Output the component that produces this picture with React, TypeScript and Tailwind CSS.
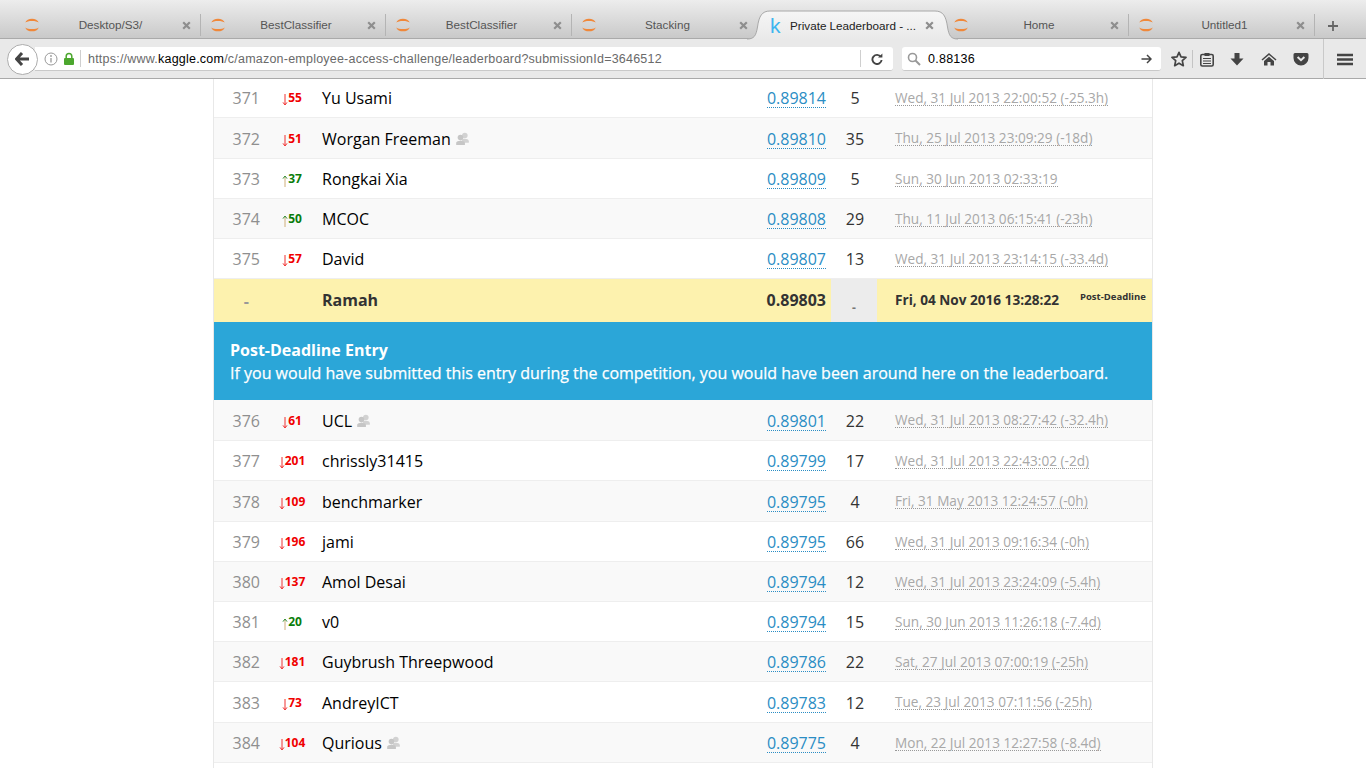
import React from "react";

const rows1 = [
  { r: 371, d: "down", c: 55, n: "Yu Usami", s: "0.89814", e: 5, t: "Wed, 31 Jul 2013 22:00:52 (-25.3h)", h: 39, z: false },
  { r: 372, d: "down", c: 51, n: "Worgan Freeman", s: "0.89810", e: 35, t: "Thu, 25 Jul 2013 23:09:29 (-18d)", h: 41, z: true, team: true },
  { r: 373, d: "up", c: 37, n: "Rongkai Xia", s: "0.89809", e: 5, t: "Sun, 30 Jun 2013 02:33:19", h: 40, z: false },
  { r: 374, d: "up", c: 50, n: "MCOC", s: "0.89808", e: 29, t: "Thu, 11 Jul 2013 06:15:41 (-23h)", h: 40, z: true },
  { r: 375, d: "down", c: 57, n: "David", s: "0.89807", e: 13, t: "Wed, 31 Jul 2013 23:14:15 (-33.4d)", h: 40, z: false },
];
const rows2 = [
  { r: 376, d: "down", c: 61, n: "UCL", s: "0.89801", e: 22, t: "Wed, 31 Jul 2013 08:27:42 (-32.4h)", h: 41, z: true, team: true },
  { r: 377, d: "down", c: 201, n: "chrissly31415", s: "0.89799", e: 17, t: "Wed, 31 Jul 2013 22:43:02 (-2d)", h: 40, z: false },
  { r: 378, d: "down", c: 109, n: "benchmarker", s: "0.89795", e: 4, t: "Fri, 31 May 2013 12:24:57 (-0h)", h: 41, z: true },
  { r: 379, d: "down", c: 196, n: "jami", s: "0.89795", e: 66, t: "Wed, 31 Jul 2013 09:16:34 (-0h)", h: 40, z: false },
  { r: 380, d: "down", c: 137, n: "Amol Desai", s: "0.89794", e: 12, t: "Wed, 31 Jul 2013 23:24:09 (-5.4h)", h: 40, z: true },
  { r: 381, d: "up", c: 20, n: "v0", s: "0.89794", e: 15, t: "Sun, 30 Jun 2013 11:26:18 (-7.4d)", h: 40, z: false },
  { r: 382, d: "down", c: 181, n: "Guybrush Threepwood", s: "0.89786", e: 22, t: "Sat, 27 Jul 2013 07:00:19 (-25h)", h: 40, z: true },
  { r: 383, d: "down", c: 73, n: "AndreyICT", s: "0.89783", e: 12, t: "Tue, 23 Jul 2013 07:11:56 (-25h)", h: 41, z: false },
  { r: 384, d: "down", c: 104, n: "Qurious", s: "0.89775", e: 4, t: "Mon, 22 Jul 2013 12:27:58 (-8.4d)", h: 40, z: true, team: true },
];

function Jupyter() {
  return (
    <svg width="14" height="14" viewBox="0 0 14 14" className="shrink-0">
      <path d="M0.3 4.6C1.6 -0.6 12.4 -0.6 13.7 4.6C11.6 2.4 2.4 2.4 0.3 4.6Z" fill="#f0883a" />
      <path d="M0.3 9.4C1.6 14.6 12.4 14.6 13.7 9.4C11.6 11.6 2.4 11.6 0.3 9.4Z" fill="#f0883a" />
    </svg>
  );
}

function CloseX() {
  return (
    <svg width="9" height="9" viewBox="0 0 9 9" className="shrink-0">
      <path d="M1.2 1.2L7.8 7.8M7.8 1.2L1.2 7.8" stroke="#8e8e8e" strokeWidth="2.2" />
    </svg>
  );
}

function Tab({ t, w, ml, sep = true }: { t: string; w: number; ml: number; sep?: boolean }) {
  return (
    <div className="flex h-[38px] items-center shrink-0 pt-[12px] relative" style={{ width: w }}>
      <div className="flex items-center" style={{ marginLeft: ml }}><Jupyter /></div>
      <div className="flex-1 text-center text-[11.7px] leading-none text-[#555]">{t}</div>
      <div className="mr-[9px]"><CloseX /></div>
      {sep && <div className="absolute -right-px top-[14px] h-[22px] w-px bg-[#b4b4b4]" />}
    </div>
  );
}

function TeamIcon() {
  return (
    <svg width="13" height="14" viewBox="0 0 14 14" className="ml-[5px] shrink-0">
      <circle cx="9.5" cy="3.2" r="3" fill="#d2d2d2" />
      <path d="M6 8C6 6.5 13.8 6 13.8 9.5V11H8Z" fill="#d2d2d2" />
      <circle cx="4.8" cy="5.5" r="3" fill="#c6c6c6" />
      <path d="M0.2 13.5V11C0.2 8 9.6 8 9.6 11V13.5Z" fill="#c6c6c6" />
    </svg>
  );
}

function Arrow({ up }: { up: boolean }) {
  return (
    <svg width="6" height="12" viewBox="0 0 6 12" className="shrink-0 mt-[4px]">
      {up ? (
        <>
          <path d="M3 12V2" stroke="#cfae7a" strokeWidth="1" />
          <path d="M1 3.6L3 1L5 3.6" stroke="#2e8b2e" strokeWidth="1" fill="none" />
        </>
      ) : (
        <path d="M3 0V10.5M1 8.4L3 11L5 8.4" stroke="#f03030" strokeWidth="1" fill="none" />
      )}
    </svg>
  );
}

type R = { r: number; d: string; c: number; n: string; s: string; e: number; t: string; h: number; z: boolean; team?: boolean };

function Row({ row }: { row: R }) {
  const up = row.d === "up";
  return (
    <div className={`flex items-center border-b border-b-[#eeeeee] ${row.h === 41 ? "pt-[1px]" : ""} ${row.z ? "bg-[#f9f9f9]" : "bg-white"}`} style={{ height: row.h }}>
      <div className="w-[57px] text-right text-[16px] text-[#8f8f8f] pr-[11px] shrink-0">{row.r}</div>
      <div className="w-[42px] shrink-0 flex justify-center items-center">
        <Arrow up={up} />
        <span className={`text-[12px] font-bold leading-none ${up ? "text-[#0a7d0a]" : "text-[#f00000]"}`}>{row.c}</span>
      </div>
      <div className="ml-[9px] w-[440px] shrink-0 flex items-center text-[16px] text-black">
        <span>{row.n}</span>
        {row.team && <TeamIcon />}
      </div>
      <div className="w-[64px] text-[16px] text-[#2a8dc4] text-right shrink-0">
        <span className="border-b border-dotted border-b-[#2a8dc4] leading-[17px] inline-block">{row.s}</span>
      </div>
      <div className="w-[58px] shrink-0 text-center text-[16px] text-[#333]">{row.e}</div>
      <div className={`flex-1 pl-[11px] text-[13.6px] text-[#a8a8a8] whitespace-nowrap ${row.h === 40 ? "pt-[2px]" : ""}`}>
        <span className="border-b border-dotted border-b-[#999] leading-[15px] inline-block">{row.t}</span>
      </div>
    </div>
  );
}

export default function App() {
  return (
    <div className="h-[768px] w-[1366px] overflow-hidden bg-white font-['Open_Sans',sans-serif] flex flex-col">
      <div className="h-[39px] shrink-0 flex bg-gradient-to-b from-[#ededed] to-[#c9c9c9] border-b border-b-[#aaaaaa] pl-[16px] font-['Liberation_Sans',Arial,sans-serif] relative">
        <Tab t="Desktop/S3/" w={184} ml={9} />
        <Tab t="BestClassifier" w={185} ml={11} />
        <Tab t="BestClassifier" w={186} ml={11} />
        <Tab t="Stacking" w={186} ml={11} sep={false} />
        <div className="w-[191px] h-[39px] shrink-0 flex items-center pt-[12px] relative z-10">
          <svg width="211" height="30" viewBox="0 0 211 30" className="absolute -left-[10px] top-[10px] -z-10">
            <defs>
              <linearGradient id="activeTab" x1="0" y1="0" x2="0" y2="1">
                <stop offset="0" stopColor="#f6f6f6" />
                <stop offset="1" stopColor="#e9e9e9" />
              </linearGradient>
            </defs>
            <path d="M0 29C7 29 9 26 10.5 17C12 6 15 1 23 1H188C196 1 199 6 200.5 17C202 26 204 29 211 29V30H0Z" fill="url(#activeTab)" />
            <path d="M0 29C7 29 9 26 10.5 17C12 6 15 1 23 1H188C196 1 199 6 200.5 17C202 26 204 29 211 29" fill="none" stroke="#a8a8a8" />
          </svg>
          <span className="ml-[13px] text-[21px] leading-none text-[#3db5ef] w-[14px] -mt-[1px]">k</span>
          <span className="ml-[6px] text-[11.7px] text-[#222] flex-1 whitespace-nowrap">Private Leaderboard - ...</span>
          <span className="mr-[14px]"><CloseX /></span>
        </div>
        <Tab t="Home" w={180} ml={6} />
        <Tab t="Untitled1" w={186} ml={11} />
        <div className="w-[38px] flex items-center justify-center pt-[13px]">
          <svg width="12" height="12" viewBox="0 0 12 12"><path d="M6 1V11M1 6H11" stroke="#666" strokeWidth="1.8" /></svg>
        </div>
      </div>

      <div className="h-[40px] shrink-0 flex items-center pt-[1px] bg-[#e9e9e9] border-b border-b-[#a9a9a9] relative font-['Liberation_Sans',Arial,sans-serif]">
        <div className="ml-[7px] w-[31px] h-[31px] rounded-full bg-white border border-[#adadad] flex items-center justify-center shrink-0 z-10">
          <svg width="15" height="14" viewBox="0 0 15 14"><path d="M7 1L1.5 7L7 13M2 7H14" stroke="#444" strokeWidth="3" fill="none" /></svg>
        </div>
        <div className="-ml-[3px] w-[858px] h-[24px] bg-white rounded-r-[3px] border-b border-b-[#c9c9c9] shrink-0 flex items-center pl-[9px]">
          <svg width="14" height="14" viewBox="0 0 14 14" className="shrink-0">
            <circle cx="7" cy="7" r="6" fill="none" stroke="#999" strokeWidth="1" />
            <circle cx="7" cy="4" r="0.9" fill="#999" />
            <path d="M7 6V10.5" stroke="#999" strokeWidth="1.3" />
          </svg>
          <svg width="12" height="14" viewBox="0 0 12 14" className="ml-[5px] shrink-0">
            <rect x="1" y="6" width="10" height="7" rx="1" fill="#4ca72e" />
            <path d="M3.2 6V4.2a2.8 2.8 0 0 1 5.6 0V6" fill="none" stroke="#4ca72e" strokeWidth="1.5" />
          </svg>
          <div className="ml-[5px] w-px h-[17px] bg-[#cfcfcf] shrink-0" />
          <div className="ml-[7px] text-[12.5px] text-[#6a6a6a] whitespace-nowrap tracking-[0.0175em] w-[772px] shrink-0 pt-[1px]">
            https://www.<span className="text-black">kaggle.com</span>/c/amazon-employee-access-challenge/leaderboard?submissionId=3646512
          </div>
          <div className="w-px h-[17px] bg-[#cfcfcf] shrink-0" />
          <svg width="12" height="12" viewBox="0 0 12 12" className="ml-[10px] shrink-0">
            <path d="M9.8 3.8A4.6 4.6 0 1 0 10.6 7" stroke="#444" strokeWidth="1.9" fill="none" />
            <path d="M7 4.6L11.4 4.6L11.4 0.4Z" fill="#444" />
          </svg>
        </div>
        <div className="ml-[9px] w-[259px] h-[24px] bg-white rounded-[3px] border-b border-b-[#c9c9c9] shrink-0 flex items-center pl-[5px]">
          <svg width="14" height="14" viewBox="0 0 14 14" className="shrink-0">
            <circle cx="5.5" cy="5.5" r="4" fill="none" stroke="#999" strokeWidth="1.6" />
            <path d="M8.5 8.5L13 13" stroke="#999" strokeWidth="2" />
          </svg>
          <span className="ml-[7px] text-[12.5px] text-black flex-1 tracking-[0.02em] pt-[1px]">0.88136</span>
          <svg width="11" height="10" viewBox="0 0 11 10" className="mr-[9px]"><path d="M6 1L10 5L6 9M0.5 5H9.5" stroke="#444" strokeWidth="1.5" fill="none" /></svg>
        </div>
        <div className="ml-[10px] flex items-center shrink-0">
          <svg width="16" height="16" viewBox="0 0 16 16"><path d="M8 1.3L10 5.8L15 6.4L11.3 9.7L12.3 14.7L8 12.2L3.7 14.7L4.7 9.7L1 6.4L6 5.8Z" fill="none" stroke="#444" strokeWidth="1.7" strokeLinejoin="round" /></svg>
          <div className="ml-[5px] w-px h-[18px] bg-[#c4c4c4]" />
          <svg width="14" height="15" viewBox="0 0 14 15" className="ml-[7px]">
            <rect x="0.8" y="2.5" width="12.4" height="11.5" rx="1.5" fill="none" stroke="#444" strokeWidth="1.6" />
            <rect x="4.5" y="1" width="5" height="3" fill="#444" />
            <path d="M3 6.5H11M3 9H11M3 11.5H11" stroke="#444" strokeWidth="1.2" />
          </svg>
          <svg width="14" height="14" viewBox="0 0 14 14" className="ml-[16px]"><path d="M4.5 1H9.5V6.5H13.5L7 13.5L0.5 6.5H4.5Z" fill="#444" /></svg>
          <svg width="16" height="14" viewBox="0 0 16 14" className="ml-[17px]"><path d="M8 1L0.5 7.6L1.5 8.6L8 3L14.5 8.6L15.5 7.6Z" fill="#444" /><path d="M3 9L8 4.8L13 9V13.5H9.5V10H6.5V13.5H3Z" fill="#444" /></svg>
          <svg width="16" height="14" viewBox="0 0 16 14" className="ml-[16px]"><path d="M0.5 2.5A1.5 1.5 0 0 1 2 1H14A1.5 1.5 0 0 1 15.5 2.5V6A7.5 7.5 0 0 1 0.5 6Z" fill="#444" /><path d="M4.6 5L8 8.2L11.4 5" stroke="#e9e9e9" strokeWidth="2" fill="none" /></svg>
          <div className="ml-[14px] w-px h-[40px] bg-[#c9c9c9] -my-[8px]" />
          <svg width="16" height="13" viewBox="0 0 16 13" className="ml-[13px]"><path d="M0 2H16M0 6.5H16M0 11H16" stroke="#444" strokeWidth="2.4" /></svg>
        </div>
      </div>

      <div className="w-[940px] ml-[213px] border-x border-x-[#e8e8e8] shrink-0">
        {rows1.map((x) => <Row key={x.r} row={x} />)}
        <div className="h-[43px] flex items-center bg-[#fdf2ae] text-[#333]">
          <div className="w-[35px] text-right text-[16px] text-[#999] shrink-0 font-bold">-</div>
          <div className="ml-[73px] w-[440px] shrink-0 text-[16px] font-bold -mt-[1px]">Ramah</div>
          <div className="w-[64px] shrink-0 text-right text-[16px] font-bold -mt-[1px]">0.89803</div>
          <div className="ml-[5px] w-[46px] h-full bg-[#ececec] shrink-0 flex items-center justify-center text-[#777] text-[12px] font-bold pt-[14px]">-</div>
          <div className="pl-[18px] w-[203px] shrink-0 text-[13.6px] font-bold whitespace-nowrap">Fri, 04 Nov 2016 13:28:22</div>
          <div className="text-[9.5px] font-bold whitespace-nowrap -mt-[7px]">Post-Deadline</div>
        </div>
        <div className="h-[78px] bg-[#2ba6d8] text-white pl-[16px] pt-[2px] flex flex-col justify-center">
          <div className="text-[16px] leading-[23px] font-bold">Post-Deadline Entry</div>
          <div className="text-[16px] leading-[23px] font-normal whitespace-nowrap [-webkit-text-stroke:0.25px_white]">If you would have submitted this entry during the competition, you would have been around here on the leaderboard.</div>
        </div>
        {rows2.map((x) => <Row key={x.r} row={x} />)}
        <div className="h-[20px] bg-white" />
      </div>
    </div>
  );
}
